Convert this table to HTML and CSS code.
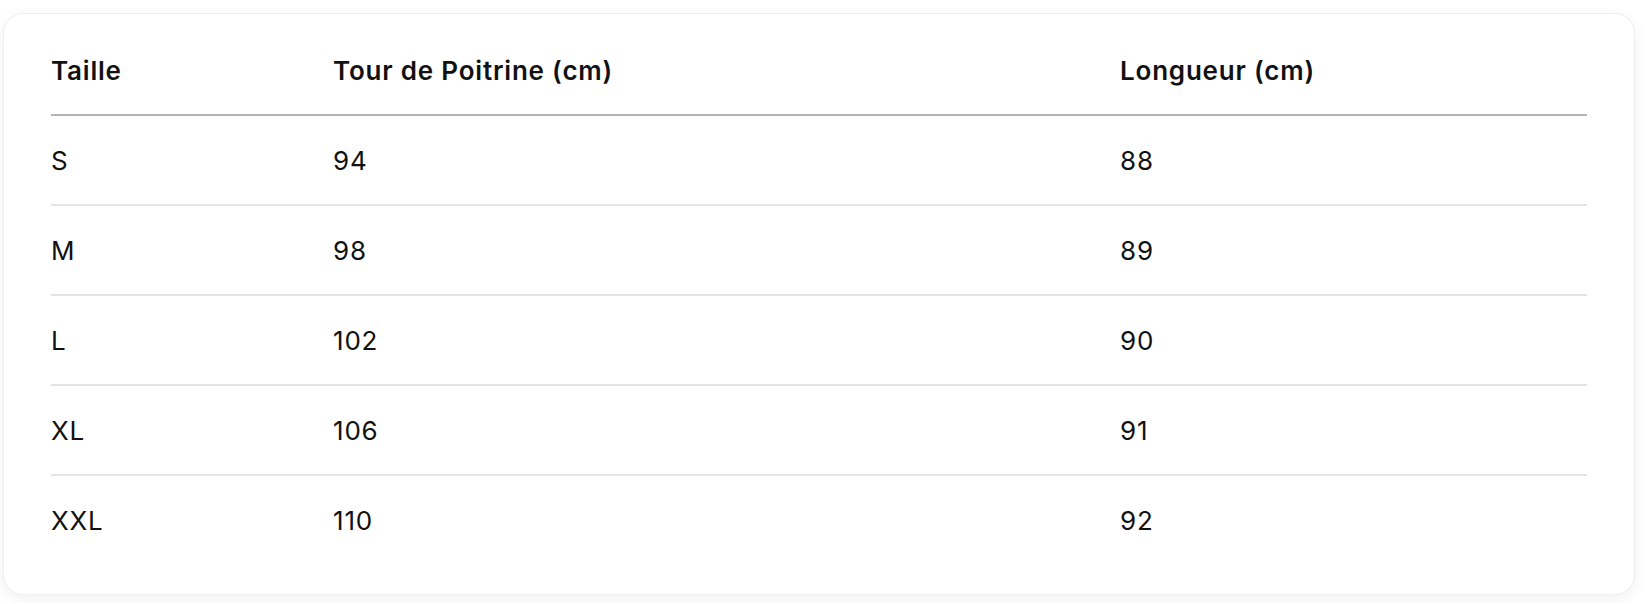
FILE: index.html
```html
<!DOCTYPE html>
<html lang="fr">
<head>
<meta charset="utf-8">
<title>Guide des tailles</title>
<link rel="stylesheet" href="styles.css">
</head>
<body>
  <div class="card">
    <table class="size-table">
      <colgroup>
        <col class="col-size">
        <col class="col-chest">
        <col class="col-length">
      </colgroup>
      <thead>
        <tr>
          <th>Taille</th>
          <th>Tour de Poitrine (cm)</th>
          <th>Longueur (cm)</th>
        </tr>
      </thead>
      <tbody>
        <tr><td>S</td><td>94</td><td>88</td></tr>
        <tr><td>M</td><td>98</td><td>89</td></tr>
        <tr><td>L</td><td>102</td><td>90</td></tr>
        <tr><td>XL</td><td>106</td><td>91</td></tr>
        <tr class="last"><td>XXL</td><td>110</td><td>92</td></tr>
      </tbody>
    </table>
  </div>
</body>
</html>
```
FILE: styles.css
```css
html, body {
  margin: 0;
  padding: 0;
  background: #ffffff;
}

body {
  padding: 13px 13px 8px 3px;
  font-family: Inter, "Noto Sans", "Liberation Sans", sans-serif;
  color: #111111;
}

.card {
  background: #ffffff;
  border: 1px solid #efefef;
  border-radius: 20px;
  box-shadow: 0 4px 14px rgba(0, 0, 0, 0.06);
  padding: 12px 47px 30px 47px;
}

.size-table {
  width: 100%;
  border-collapse: collapse;
  table-layout: fixed;
}

.col-size { width: 282px; }
.col-chest { width: 787px; }

.size-table th,
.size-table td {
  text-align: left;
  padding: 27px 0 25px;
  font-size: 26px;
  line-height: 36px;
  letter-spacing: 0.8px;
}

.size-table th {
  font-weight: 600;
  border-bottom: 2px solid #b4b4b4;
}

.size-table td {
  font-weight: 400;
  border-bottom: 2px solid #e4e4e4;
}

.size-table tr.last td {
  border-bottom: none;
}
```
